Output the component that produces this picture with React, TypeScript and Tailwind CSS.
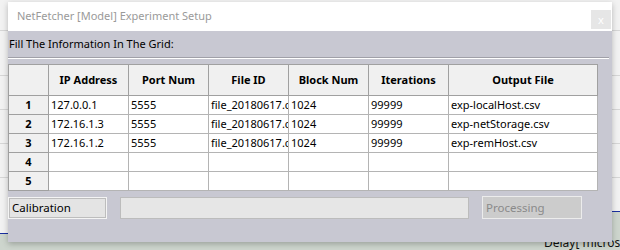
import React from 'react'

const font = { fontFamily: '"Noto Sans", "Open Sans", sans-serif' }

const columns = ['IP Address', 'Port Num', 'File ID', 'Block Num', 'Iterations', 'Output File']

const rows = [
  ['127.0.0.1', '5555', 'file_20180617.csv', '1024', '99999', 'exp-localHost.csv'],
  ['172.16.1.3', '5555', 'file_20180617.csv', '1024', '99999', 'exp-netStorage.csv'],
  ['172.16.1.2', '5555', 'file_20180617.csv', '1024', '99999', 'exp-remHost.csv'],
  ['', '', '', '', '', ''],
  ['', '', '', '', '', ''],
]

function Backdrop() {
  // the spreadsheet-like app that sits behind the dialog
  const lines = [30, 75, 109, 143, 177]
  return (
    <div className="absolute inset-0 bg-[#f2f2f2]">
      {lines.map((y) => (
        <div key={y} className="absolute left-0 right-0 h-px bg-[#d6d6d6]" style={{ top: y }} />
      ))}
      <div className="absolute left-0 top-[233px] h-px w-[10px] bg-[#1a2fa0]" />
      <div className="absolute left-0 top-[234px] bottom-0 w-full bg-[#cdd5cd]" />
      <div className="absolute right-0 top-[211px] h-px w-[10px] bg-[#1a2fa0]" />
      <div className="absolute right-0 top-[212px] h-[24px] w-[10px] bg-[#cdd5cd]" />
      <div className="absolute left-[544px] top-[236px] text-[12px] leading-[14px] text-[#111] whitespace-nowrap" style={font}>
        Delay[ microse
      </div>
    </div>
  )
}

export default function App() {
  return (
    <div className="relative w-[620px] h-[250px] overflow-hidden" style={font}>
      <Backdrop />
      <div className="relative ml-[8px] mt-[2px] w-[604px] h-[240px] bg-[#c8c8d2] shadow-[0_2px_6px_rgba(0,0,0,0.25)] flex flex-col">
        {/* title bar */}
        <div className="h-[29px] bg-white flex items-center justify-between pl-[9px] pr-[1px]">
          <span className="text-[11px] text-[#9a9a9a] whitespace-nowrap">NetFetcher [Model] Experiment Setup</span>
          <div className="w-[20px] h-[19px] mt-[6px] bg-[#e6e6e6] flex items-center justify-center text-[11px] text-white leading-none">
            x
          </div>
        </div>

        <div className="pl-[1px] pt-[5px] text-[11px] leading-[16px] text-black whitespace-nowrap">
          Fill The Information In The Grid:
        </div>

        <div className="mt-[5px] mr-[3px] h-[2px] border-t border-[#a0a0a8] border-b-white border-b" />

        {/* grid */}
        <div className="mt-[5px] w-[590px] border-l border-t border-[#a0a0a0] grid grid-cols-[40px_80px_80px_80px_80px_80px_149px] text-[11px] text-black">
          <div className="h-[31px] bg-[#f0f0f0] border-r border-b border-[#a0a0a0]" />
          {columns.map((c) => (
            <div
              key={c}
              className="h-[31px] bg-[#f0f0f0] border-r border-b border-[#a0a0a0] flex items-center justify-center font-bold"
            >
              {c}
            </div>
          ))}
          {rows.map((r, i) => (
            <React.Fragment key={i}>
              <div className="h-[19px] bg-[#f0f0f0] border-r border-b border-[#a0a0a0] flex items-center justify-center font-bold">
                {i + 1}
              </div>
              {r.map((v, j) => (
                <div
                  key={j}
                  className="h-[19px] bg-white border-r border-b border-[#b4b4b4] flex items-center pl-[2px] overflow-hidden whitespace-nowrap"
                >
                  {v}
                </div>
              ))}
            </React.Fragment>
          ))}
        </div>

        {/* bottom controls */}
        <div className="mt-[5px] flex items-center">
          <div className="w-[99px] h-[22px] bg-[#e4e4e4] border border-[#f4f4f4] outline outline-1 outline-[#bdbdbd] -outline-offset-2 flex items-center pl-[3px] text-[11.5px] text-black">
            Calibration
          </div>
          <div className="ml-[13px] w-[349px] h-[22px] bg-[#e6e6e6] border border-[#bcbcbc]" />
          <div className="ml-[13px] w-[100px] h-[23px] bg-[#cccccc] border border-[#ececec] flex items-center pl-[3px] text-[11.5px] text-[#8a8a8a]">
            Processing
          </div>
        </div>
      </div>
    </div>
  )
}
